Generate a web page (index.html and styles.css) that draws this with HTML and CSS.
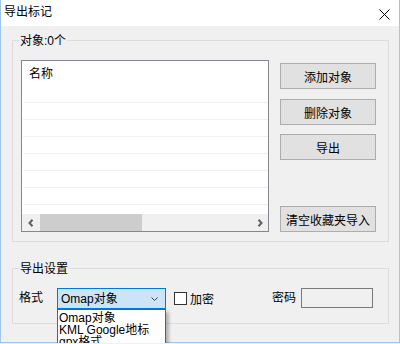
FILE: index.html
```html
<!DOCTYPE html>
<html lang="zh-CN">

<head>
  <meta charset="UTF-8">
  <meta name="viewport" content="width=device-width, initial-scale=1.0">
  <title>导出标记</title>
  <link rel="stylesheet" href="styles.css">
</head>

<body>
  <div class="window">
    <div class="titlebar">
      <span class="title">导出标记</span>
      <svg class="close" width="11" height="11" viewBox="0 0 11 11">
        <path d="M0.5 0.5 L10.5 10.5 M10.5 0.5 L0.5 10.5" stroke="#000" stroke-width="1" fill="none" />
      </svg>
    </div>

    <div class="content">
      <fieldset class="group objects">
        <legend>对象:0个</legend>
        <div class="objects-body">
          <div class="listview">
            <div class="lv-header">名称</div>
            <div class="lv-row"></div>
            <div class="lv-row"></div>
            <div class="lv-row"></div>
            <div class="lv-row"></div>
            <div class="lv-row"></div>
            <div class="lv-row"></div>
            <div class="lv-row"></div>
            <div class="lv-fill"></div>
            <div class="hscroll">
              <span class="sb-btn">
                <svg width="6" height="8" viewBox="0 0 6 8">
                  <polyline points="4.5,0.8 1.5,4 4.5,7.2" stroke="#606060" stroke-width="2" fill="none" />
                </svg>
              </span>
              <span class="sb-thumb"></span>
              <span class="sb-space"></span>
              <span class="sb-btn">
                <svg width="6" height="8" viewBox="0 0 6 8">
                  <polyline points="1.5,0.8 4.5,4 1.5,7.2" stroke="#606060" stroke-width="2" fill="none" />
                </svg>
              </span>
            </div>
          </div>

          <div class="side-buttons">
            <button class="btn btn-add">添加对象</button>
            <button class="btn btn-del">删除对象</button>
            <button class="btn btn-export">导出</button>
            <button class="btn btn-clear">清空收藏夹导入</button>
          </div>
        </div>
      </fieldset>

      <fieldset class="group settings">
        <legend>导出设置</legend>
        <div class="settings-row">
          <span class="field-label">格式</span>
          <div class="combo">
            <div class="combo-box">
              <span>Omap对象</span>
              <svg class="combo-arrow" width="7" height="4" viewBox="0 0 7 4">
                <polyline points="0.5,0.5 3.5,3.5 6.5,0.5" stroke="#444" stroke-width="1" fill="none" />
              </svg>
            </div>
            <ul class="combo-list">
              <li>Omap对象</li>
              <li>KML Google地标</li>
              <li>gpx格式</li>
              <li>csv格式</li>
            </ul>
          </div>
          <label class="check">
            <span class="check-box"></span>
            <span>加密</span>
          </label>
          <span class="field-label pwd-label">密码</span>
          <span class="pwd-input"></span>
        </div>
      </fieldset>
    </div>
  </div>
</body>

</html>
```

FILE: styles.css
```css
html,
body {
  margin: 0;
  overflow: hidden;
  background: #f0f0f0;
}

body {
  font-family: "Liberation Sans Narrow", "Liberation Sans", "Noto Sans CJK SC", sans-serif;
  font-size: 12px;
  color: #000;
}

.window {
  width: 400px;
  height: 343px;
  box-sizing: border-box;
  border: 1px solid #9ec5ea;
  border-top: none;
  background: #f0f0f0;
}

.titlebar {
  height: 26px;
  background: #fff;
  display: flex;
  align-items: flex-start;
  padding-left: 3px;
}

.title {
  line-height: 14px;
  margin-top: 5px;
}

.close {
  margin-left: auto;
  margin-right: 9px;
  margin-top: 9px;
}

.content {
  padding: 7px 10px 0 11px;
}

.group {
  width: 377px;
  box-sizing: border-box;
  margin: 0;
  border: 1px solid #dcdcdc;
  padding: 12px 0 9px 0;
  min-width: 0;
}

.group legend {
  margin-left: 6px;
  padding: 2px 1px 0 1px;
  line-height: 13px;
}

/* 对象 */
.objects-body {
  display: flex;
  padding-left: 8px;
}

.listview {
  width: 248px;
  height: 172px;
  box-sizing: border-box;
  border: 1px solid #828790;
  background: #fff;
  display: flex;
  flex-direction: column;
}

.lv-header {
  height: 25px;
  box-sizing: border-box;
  padding: 6px 0 0 7px;
  line-height: 14px;
}

.lv-row {
  height: 17px;
  box-sizing: border-box;
  margin-left: 1px;
  border-bottom: 1px solid #f0f0f0;
}

.lv-fill {
  flex: 1;
}

.hscroll {
  height: 17px;
  display: flex;
  background: #f0f0f0;
}

.sb-btn {
  width: 17px;
  display: flex;
  align-items: center;
  justify-content: center;
}

.sb-thumb {
  width: 102px;
  margin-left: 1px;
  background: #cdcdcd;
}

.sb-space {
  flex: 1;
}

.side-buttons {
  display: flex;
  flex-direction: column;
  width: 96px;
  margin-left: 11px;
}

.btn {
  height: 26px;
  margin: 0;
  padding: 0;
  border: 1px solid #adadad;
  background: #e1e1e1;
  font: inherit;
  color: #000;
}

.btn-add {
  margin-top: 3px;
}

.btn-del {
  margin-top: 10px;
}

.btn-export {
  margin-top: 9px;
}

.btn-clear {
  margin-top: auto;
}

/* 导出设置 */
.settings {
  margin-top: 19px;
  padding-bottom: 14px;
}

.settings-row {
  display: flex;
  align-items: flex-start;
  padding-left: 6px;
  height: 21px;
}

.field-label {
  line-height: 21px;
}

.combo {
  position: relative;
  margin-left: 14px;
  width: 109px;
}

.combo-box {
  height: 21px;
  box-sizing: border-box;
  border: 1px solid #0078d7;
  background: #cce4f7;
  display: flex;
  align-items: center;
  padding-left: 3px;
  line-height: 14px;
}

.combo-arrow {
  margin-left: auto;
  margin-right: 7px;
}

.combo-list {
  position: absolute;
  left: 0;
  top: 21px;
  width: 109px;
  box-sizing: border-box;
  margin: 0;
  padding: 2px 0 0 1px;
  list-style: none;
  background: #fff;
  border: 1px solid #0078d7;
  box-shadow: 3px 3px 3px rgba(0, 0, 0, 0.25);
}

.combo-list li {
  line-height: 12px;
  white-space: nowrap;
}

.check {
  display: flex;
  align-items: center;
  height: 21px;
  margin-left: 8px;
}

.check-box {
  width: 13px;
  height: 13px;
  box-sizing: border-box;
  border: 1px solid #333;
  background: #fff;
  margin-right: 3px;
}

.pwd-label {
  margin-left: 58px;
}

.pwd-input {
  width: 72px;
  height: 20px;
  box-sizing: border-box;
  margin-left: 5px;
  border: 1px solid #7a7a7a;
  background: #f0f0f0;
}
```
